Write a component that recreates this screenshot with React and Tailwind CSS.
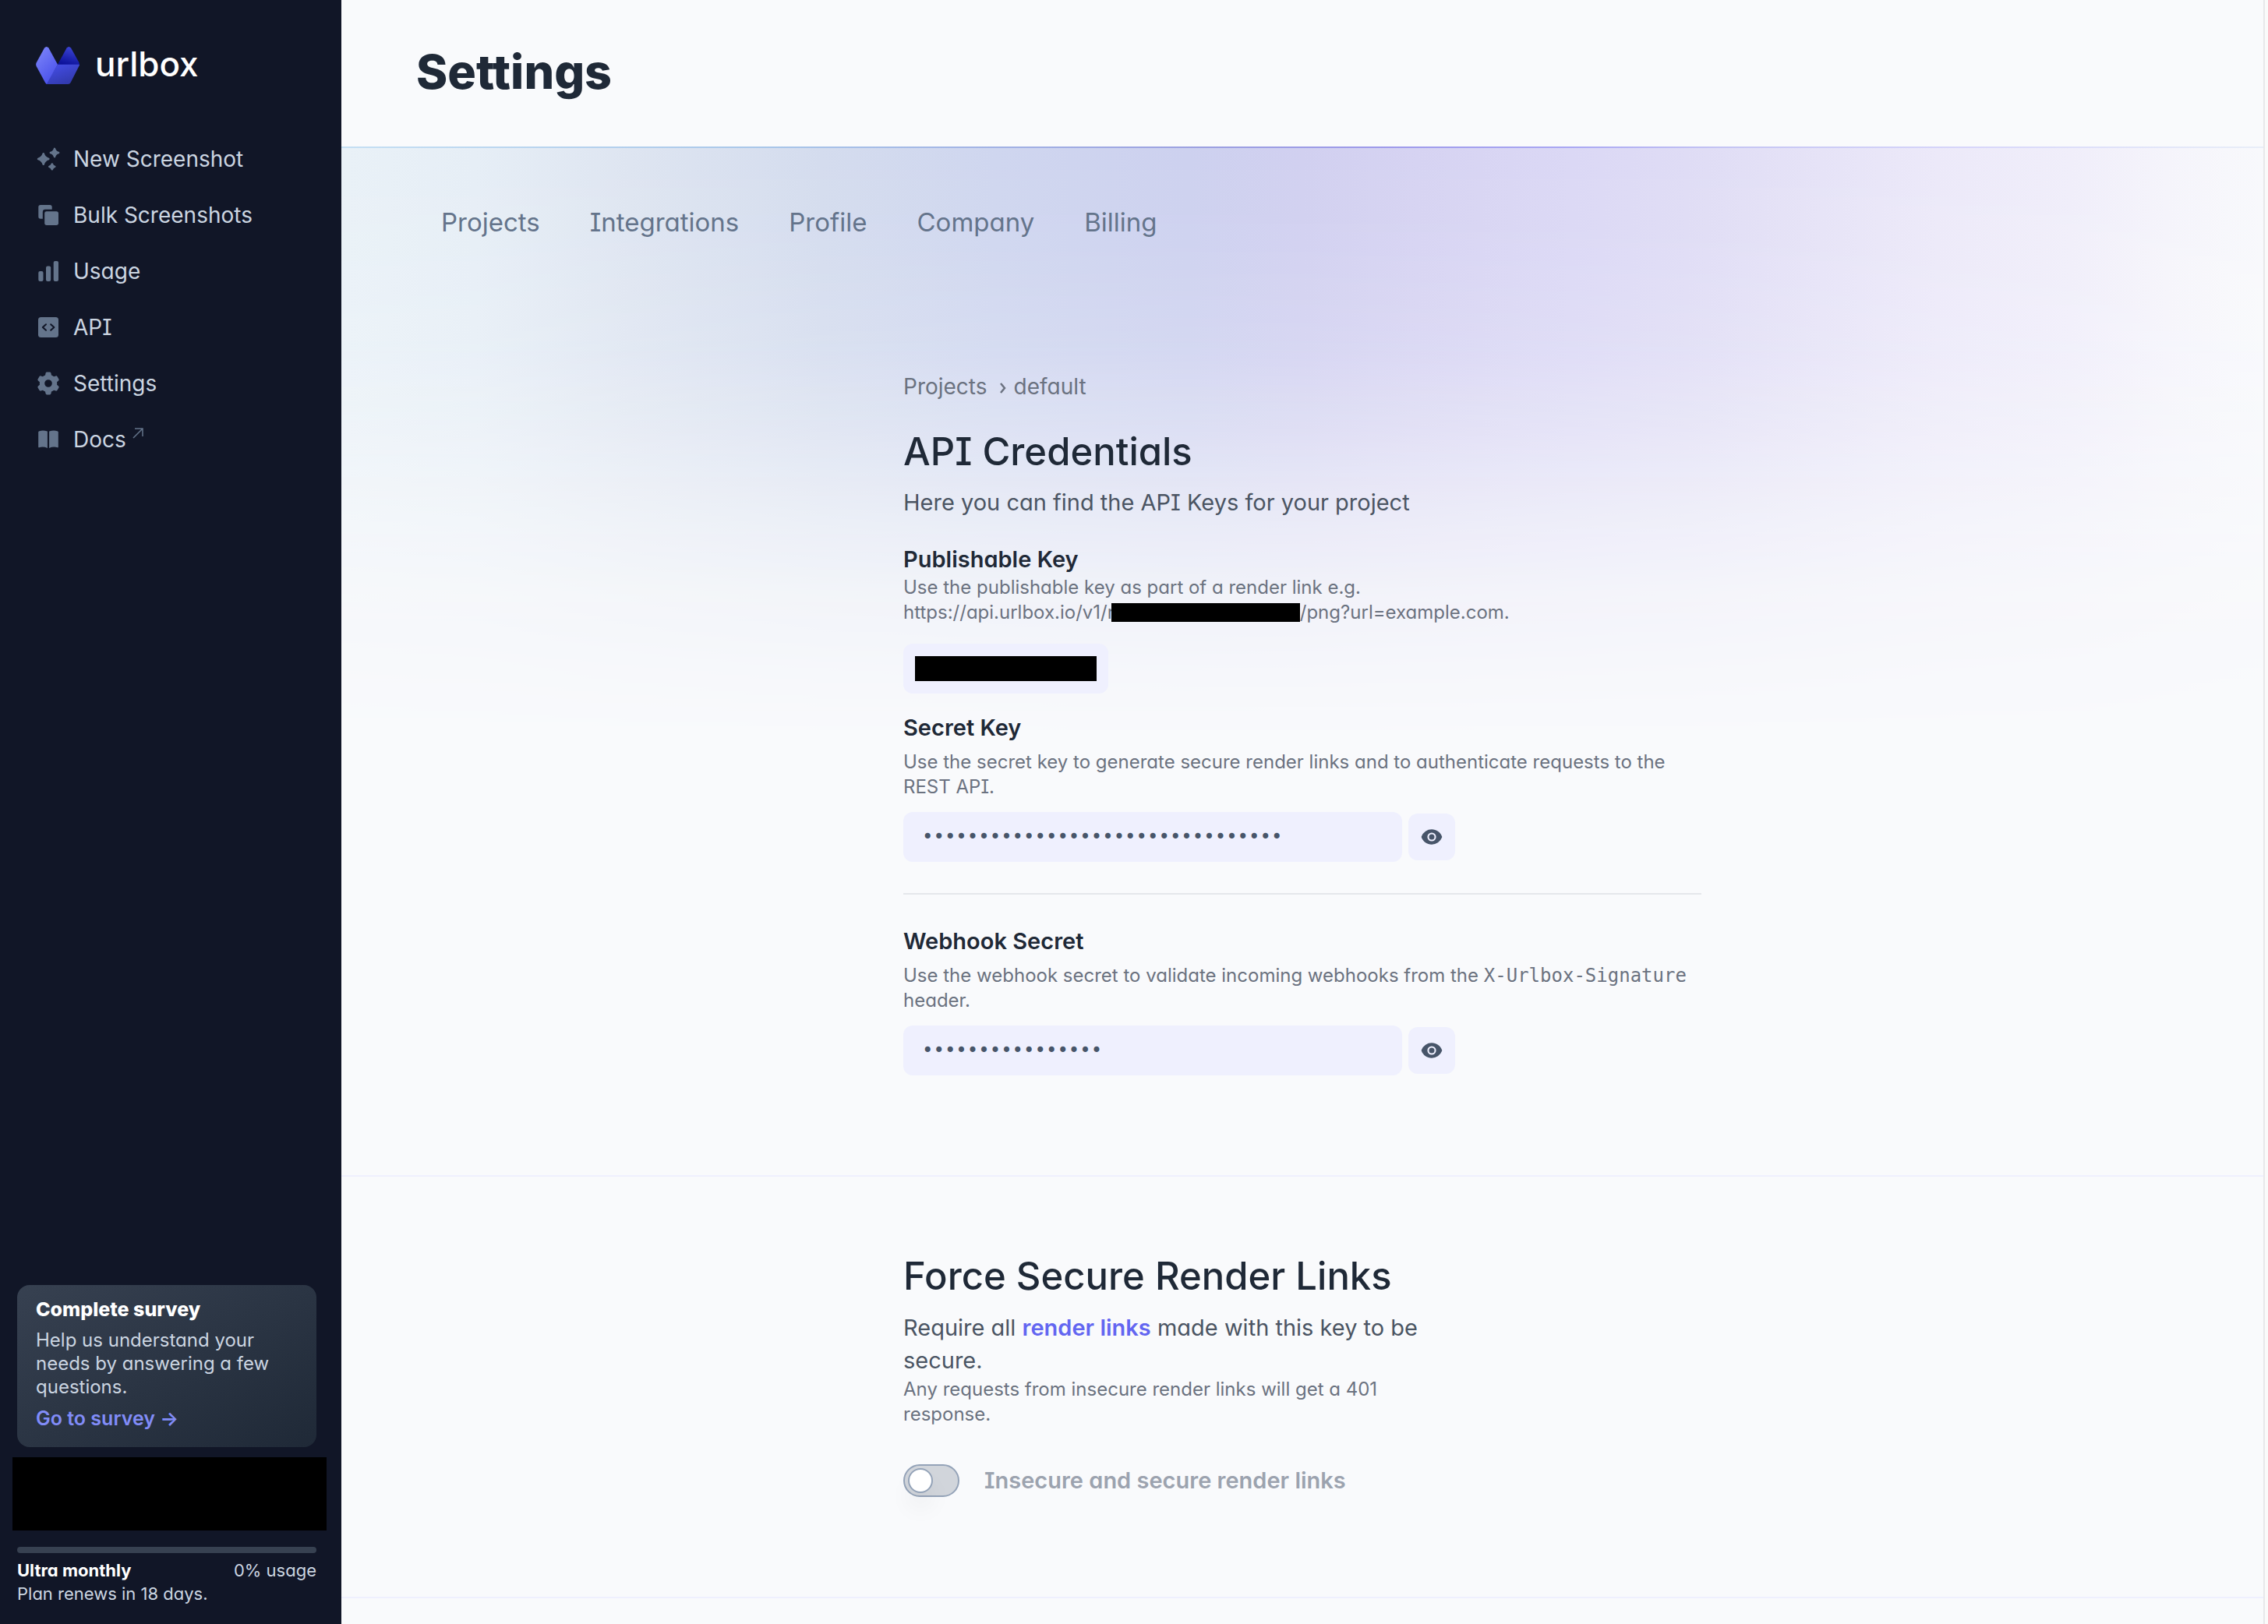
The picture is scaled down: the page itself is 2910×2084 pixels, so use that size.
import React, { useState } from "react";
import { HiMiniCog6Tooth, HiMiniEye, HiMiniEyeSlash } from "react-icons/hi2";

function Logo() {
  return (
    <svg viewBox="0 0 56 48" className="h-12 w-14" aria-hidden="true">
      <defs>
        <linearGradient id="logo-left" x1="0" y1="0" x2="0.6" y2="1">
          <stop offset="0" stopColor="#7f88fb" />
          <stop offset="1" stopColor="#4b52ea" />
        </linearGradient>
        <linearGradient id="logo-base" x1="0.2" y1="0" x2="0.8" y2="1">
          <stop offset="0" stopColor="#444de6" />
          <stop offset="1" stopColor="#3038a8" />
        </linearGradient>
        <linearGradient id="logo-flap" x1="0.8" y1="0" x2="0.5" y2="1">
          <stop offset="0" stopColor="#3f48d8" />
          <stop offset="1" stopColor="#0c119a" />
        </linearGradient>
      </defs>
      <path
        d="M28 22.7 39.6 1.6Q42.3-1.6 45 1.6L55.3 20Q56.2 22 55.6 23.5Z"
        fill="url(#logo-flap)"
      />
      <path
        d="M28 22.7H56Q56 24 55 25.6L44.6 46Q43.6 48 41.4 48H14.6Q13.4 48 13 47.4Z"
        fill="url(#logo-base)"
      />
      <path
        d="M28 22.7 16.4 1.6Q13.7-1.6 11 1.6L.8 20.2Q-.5 22.7.8 25.2L12 46Q13 47.6 14 47.6Z"
        fill="url(#logo-left)"
      />
    </svg>
  );
}

function SparklesIcon() {
  return (
    <svg viewBox="0 0 32 32" className="size-8" fill="currentColor" stroke="currentColor" strokeWidth="2.4" strokeLinejoin="round">
      <path d="M9.7 9.2Q11.2 14.5 16.4 16 11.2 17.5 9.7 22.8 8.2 17.5 3 16 8.2 14.5 9.7 9.2Z" />
      <path d="M24 2.8Q25 7 29.2 8 25 9 24 13.2 23 9 18.8 8 23 7 24 2.8Z" />
      <path d="M20.8 22.4Q21.6 25.1 24.4 25.8 21.6 26.5 20.8 29.3 20 26.5 17.2 25.8 20 25.1 20.8 22.4Z" />
    </svg>
  );
}

function StackIcon() {
  return (
    <svg viewBox="0 0 32 32" className="size-8" fill="currentColor">
      <path d="M6 3h12a2.7 2.7 0 0 1 2.7 2.7V8.8H12A3.3 3.3 0 0 0 8.8 12v8.7H6A2.7 2.7 0 0 1 3.3 18V5.7A2.7 2.7 0 0 1 6 3Z" />
      <rect x="11.2" y="11.2" width="17.8" height="17.8" rx="2.7" />
    </svg>
  );
}

function BarsIcon() {
  return (
    <svg viewBox="0 0 32 32" className="size-8" fill="currentColor">
      <rect x="3.3" y="16" width="6.2" height="13" rx="2" />
      <rect x="13" y="9.5" width="6.2" height="19.5" rx="2" />
      <rect x="22.7" y="3" width="6.3" height="26" rx="2" />
    </svg>
  );
}

function CodeIcon() {
  return (
    <svg viewBox="0 0 32 32" className="size-8">
      <rect x="3" y="3" width="26" height="26" rx="3.5" fill="currentColor" />
      <path
        d="M13 12.2 8.8 16l4.2 3.8M19.2 12.2 23.4 16l-4.2 3.8"
        fill="none"
        stroke="#111627"
        strokeWidth="2"
        strokeLinecap="round"
        strokeLinejoin="round"
      />
    </svg>
  );
}

function BookIcon() {
  return (
    <svg viewBox="0 0 32 32" className="size-8" fill="currentColor">
      <path d="M4.4 5.2Q9.5 3.7 14.9 5.6V27Q9.5 24.6 4.2 26.3 3.2 26.4 3.2 25.4V6.6Q3.2 5.6 4.4 5.2Z" />
      <path d="M27.6 5.2Q22.5 3.7 17.1 5.6V27Q22.5 24.6 27.8 26.3 28.8 26.4 28.8 25.4V6.6Q28.8 5.6 27.6 5.2Z" />
    </svg>
  );
}

function ExternalArrow() {
  return (
    <svg viewBox="0 0 14 14" className="mb-4 size-3.5" fill="none" stroke="#64748b" strokeWidth="1.5">
      <path d="M1 13 13 1M3 1h10v10" />
    </svg>
  );
}

const navItems = [
  { label: "New Screenshot", icon: <SparklesIcon /> },
  { label: "Bulk Screenshots", icon: <StackIcon /> },
  { label: "Usage", icon: <BarsIcon /> },
  { label: "API", icon: <CodeIcon /> },
  { label: "Settings", icon: <HiMiniCog6Tooth className="size-8" /> },
  { label: "Docs", icon: <BookIcon />, external: true },
];

const tabs = ["Projects", "Integrations", "Profile", "Company", "Billing"];

function Sidebar() {
  return (
    <aside className="sticky top-0 flex h-screen w-[438px] shrink-0 flex-col bg-[#111627] pt-[60px] pr-8 pb-6 pl-[22px] text-[#cbd5e1]">
      <a href="#" className="flex h-12 items-start gap-5 pl-6">
        <Logo />
        <span className="text-[44px] leading-[44px] font-medium text-white">urlbox</span>
      </a>
      <nav className="mt-[60px]">
        {navItems.map((item) => (
          <a key={item.label} href="#" className="flex h-[72px] items-center gap-4 pl-6 text-[28px]">
            <span className="text-[#64748b]">{item.icon}</span>
            <span className="flex items-center gap-2">
              {item.label}
              {item.external && <ExternalArrow />}
            </span>
          </a>
        ))}
      </nav>

      <div className="mt-auto">
        <div className="rounded-2xl bg-linear-to-br from-[#374151] to-[#1f2937] px-6 pt-4 pb-[22px] text-2xl leading-[30px]">
          <h2 className="text-[25px] leading-[30px] font-extrabold text-white">Complete survey</h2>
          <p className="mt-2.5">Help us understand your needs by answering a few questions.</p>
          <a href="#" className="mt-2.5 block text-[25px] font-semibold text-[#818cf8]">
            Go to survey →
          </a>
        </div>
        <div className="mt-[13px] -mr-[13px] -ml-1.5 h-[94px] bg-black"></div>
        <div className="mt-[21px] h-2 rounded-full bg-[#374151]"></div>
        <div className="mt-[7px] flex justify-between text-[22px] leading-[30px]">
          <span className="font-bold text-white">Ultra monthly</span>
          <span>0% usage</span>
        </div>
        <p className="text-[22px] leading-[30px]">Plan renews in 18 days.</p>
      </div>
    </aside>
  );
}

function SecretField({ id, label, value }) {
  const [visible, setVisible] = useState(false);

  return (
    <div className="mt-4 flex items-center gap-2">
      <input
        id={id}
        type={visible ? "text" : "password"}
        value={value}
        readOnly
        aria-label={label}
        className="h-16 w-[640px] rounded-xl bg-[#eff0fe] px-6 font-['DejaVu_Sans_Mono',monospace] text-2xl text-[#475569] outline-none"
      />
      <button
        type="button"
        aria-label={"Show " + label}
        onClick={() => setVisible(!visible)}
        className="flex size-[60px] items-center justify-center rounded-xl bg-[#eff0fe] text-[#475569]"
      >
        {visible ? <HiMiniEyeSlash className="size-7" /> : <HiMiniEye className="size-7" />}
      </button>
    </div>
  );
}

function ApiCredentials() {
  return (
    <section className="mx-auto w-full max-w-[1024px] pt-[171px] pb-32">
      <div className="flex items-center text-[28px] leading-10 text-[#6b7280]">
        <a href="#">Projects</a>
        <svg viewBox="0 0 8 14" className="mt-1 mr-2.5 ml-4 h-3.5 w-2" fill="none" stroke="currentColor" strokeWidth="2.5">
          <path d="m1 1 5 6-5 6" />
        </svg>
        <a href="#">default</a>
      </div>
      <h2 className="mt-9 text-[49px] leading-[56px] font-medium text-[#1f2937]">API Credentials</h2>
      <p className="mt-[17px] text-[29px] leading-10 text-[#4b5563]">Here you can find the API Keys for your project</p>

      <h3 className="mt-[33px] text-[29px] leading-10 font-semibold text-[#1f2937]">Publishable Key</h3>
      <p className="text-2xl leading-8 text-[#6b7280]">
        Use the publishable key as part of a render link e.g.
        <br />
        https://api.urlbox.io/v1/r
        <span className="-mb-1 -ml-1 inline-block h-6 w-[242px] bg-black"></span>
        /png?url=example.com.
      </p>
      <div className="mt-6 flex h-16 w-[263px] items-center justify-center rounded-xl bg-[#eff0fe]">
        <div className="h-8 w-[233px] bg-black"></div>
      </div>

      <h3 className="mt-6 text-[29px] leading-10 font-semibold text-[#1f2937]">Secret Key</h3>
      <p className="mt-2 text-2xl leading-8 text-[#6b7280]">
        Use the secret key to generate secure render links and to authenticate requests to the REST API.
      </p>
      <SecretField id="secret-key" label="Secret Key" value={"x".repeat(32)} />

      <hr className="my-10 border-t-2 border-[#e5e7eb]" />

      <h3 className="text-[29px] leading-10 font-semibold text-[#1f2937]">Webhook Secret</h3>
      <p className="mt-2 text-2xl leading-8 text-[#6b7280]">
        Use the webhook secret to validate incoming webhooks from the{" "}
        <code className="font-['DejaVu_Sans_Mono',monospace] leading-none">X‑Urlbox‑Signature</code> header.
      </p>
      <SecretField id="webhook-secret" label="Webhook Secret" value={"x".repeat(16)} />
    </section>
  );
}

function SecureLinks() {
  const [secure, setSecure] = useState(false);

  return (
    <section className="border-y-2 border-[#eff0fe]">
      <div className="mx-auto w-full max-w-[1024px] pt-[100px] pb-32">
        <h2 className="text-[49px] leading-[56px] font-medium text-[#1f2937]">Force Secure Render Links</h2>
        <div className="w-2/3">
          <p className="mt-[17px] text-[29px] leading-[42px] text-[#4b5563]">
            Require all{" "}
            <a href="#" className="font-semibold text-[#6366f1]">
              render links
            </a>{" "}
            made with this key to be secure.
          </p>
          <p className="text-2xl leading-8 text-[#6b7280]">
            Any requests from insecure render links will get a 401 response.
          </p>
        </div>
        <label className="mt-12 flex items-center gap-8">
          <input
            type="checkbox"
            role="switch"
            checked={secure}
            onChange={(e) => setSecure(e.target.checked)}
            className="peer sr-only"
          />
          <span className="flex h-[42px] w-[72px] items-center rounded-full border-2 border-[#94a3b8] bg-[#d1d5db] px-1 peer-checked:justify-end peer-checked:bg-[#6366f1]">
            <span className="size-8 rounded-full border-2 border-[#94a3b8] bg-white shadow-[0_20px_30px_rgb(0_0_0/0.05)]"></span>
          </span>
          <span className="text-[29px] leading-[42px] font-semibold text-[#9ca3af]">
            Insecure and secure render links
          </span>
        </label>
      </div>
    </section>
  );
}

export default function App() {
  return (
    <div className="flex min-h-screen bg-[#fafafa] font-[Inter,sans-serif] [font-feature-settings:'cv08','cv11']">
      <Sidebar />
      <div className="mr-1 min-w-0 flex-1 border-r-2 border-[#e8e8ea] bg-[#f9fafc]">
        <header className="flex h-[188px] items-center px-24 pb-1">
          <h1 className="text-[61px] leading-[72px] font-extrabold text-[#1f2937]">Settings</h1>
        </header>
        <div className="h-0.5 bg-[linear-gradient(to_right,#c5dff3,#a8c6e9_22%,#9b9fe0_45%,#9d99ea_54%,#a9a7f3_64%,#c4c4f3_72%,#d7d6fa_85%,#e8eef8)]"></div>

        <main className="relative isolate">
          <div className="absolute inset-x-0 top-0 -z-10 h-[760px] bg-[linear-gradient(to_right,#e9f1f7,#e6eef6_7%,#dee5f1_15%,#d4dcee_25%,#cfd6ef_34%,#cdd1ef_44%,#d1d0f0_50%,#d6d3f2_56%,#dbd8f5_64%,#dfdcf5_70%,#e6e3f7_77%,#ece9f9_83%,#f0eefa_90%,#f5f4fb_95%,#f8f9fc)] [mask-image:linear-gradient(to_bottom,black,rgb(0_0_0/0.96)_15%,rgb(0_0_0/0.87)_32%,rgb(0_0_0/0.64)_48%,rgb(0_0_0/0.4)_61%,rgb(0_0_0/0.18)_75%,rgb(0_0_0/0.07)_88%,transparent)]"></div>
          <nav className="flex px-24 pt-[75px] text-[33px] leading-10 text-[#64748b]">
            {tabs.map((tab) => (
              <a key={tab} href="#" className="px-8">
                {tab}
              </a>
            ))}
          </nav>
          <ApiCredentials />
          <SecureLinks />
        </main>
      </div>
    </div>
  );
}
